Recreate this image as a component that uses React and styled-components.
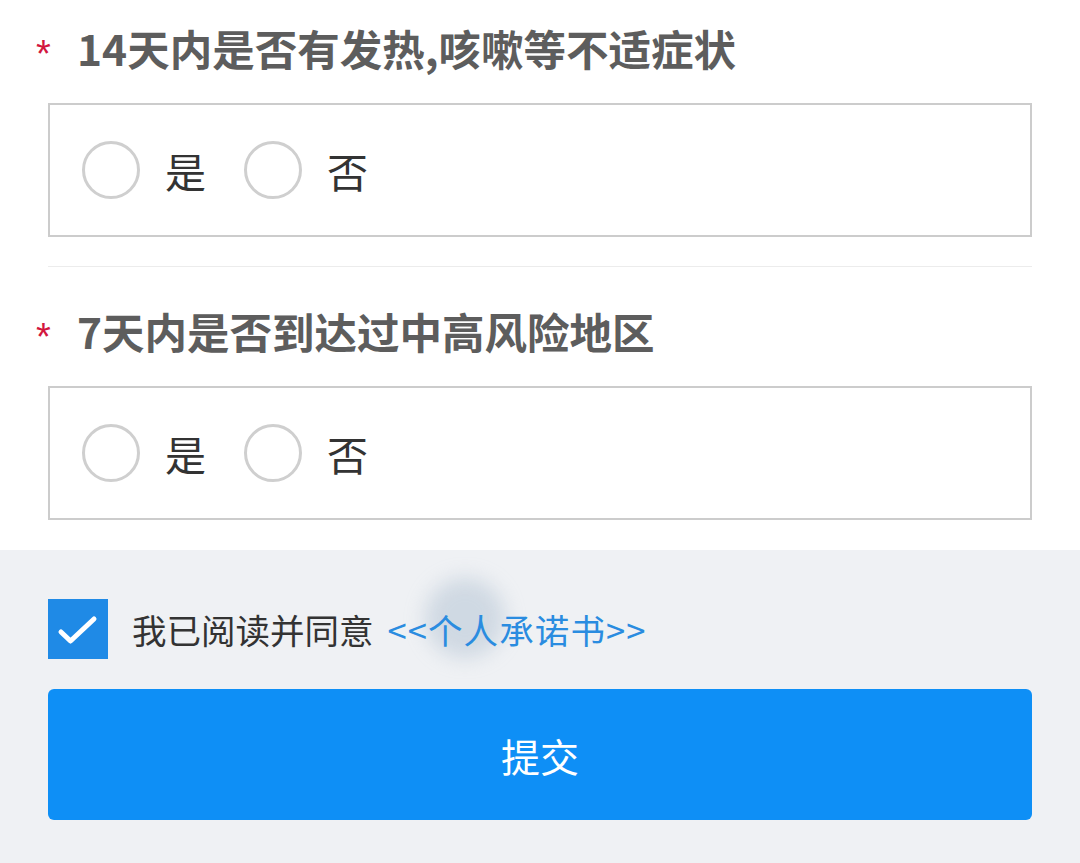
import React, { useState } from 'react';
import styled, { createGlobalStyle } from 'styled-components';

const GlobalStyle = createGlobalStyle`
    html, body {
        margin: 0;
        padding: 0;
        background: #ffffff;
        font-family: "Noto Sans CJK SC", "Noto Sans", sans-serif;
    }
`;

const questions = [
    { id: 'fever', title: '14天内是否有发热,咳嗽等不适症状' },
    { id: 'risk', title: '7天内是否到达过中高风险地区' },
];

const Question = ({ title, value, onChange }) => (
    <QuestionBlock>
        <TitleRow>
            <Star>*</Star>
            <Title>{title}</Title>
        </TitleRow>
        <OptionsBox>
            {['是', '否'].map(opt => (
                <Option key={opt} onClick={() => onChange(opt)}>
                    <Radio checked={value === opt}/>
                    <OptionLabel>{opt}</OptionLabel>
                </Option>
            ))}
        </OptionsBox>
    </QuestionBlock>
);

const App = () => {
    const [answers, setAnswers] = useState({});
    const [agreed, setAgreed] = useState(true);

    return (
        <Page>
            <GlobalStyle/>
            <Form>
                {questions.map((q, i) => (
                    <React.Fragment key={q.id}>
                        {i > 0 ? <Divider/> : null}
                        <Question
                            title={q.title}
                            value={answers[q.id]}
                            onChange={v => setAnswers({ ...answers, [q.id]: v })}
                        />
                    </React.Fragment>
                ))}
            </Form>

            <Footer>
                <Smudge/>
                <AgreeRow>
                    <CheckBox checked={agreed} onClick={() => setAgreed(!agreed)}>
                        {agreed ? (
                            <svg width="60" height="60" viewBox="0 0 60 60">
                                <path d="M13 33 L22.5 42 L46 20" fill="none" stroke="#fff"
                                      strokeWidth="5" strokeLinecap="round" strokeLinejoin="round"/>
                            </svg>
                        ) : null}
                    </CheckBox>
                    <AgreeText>我已阅读并同意</AgreeText>
                    <Link>&lt;&lt;个人承诺书&gt;&gt;</Link>
                </AgreeRow>
                <SubmitButton>提交</SubmitButton>
            </Footer>
        </Page>
    );
};

export default App;

const Page = styled.div`
    display: flex;
    flex-direction: column;
    min-height: 863px;
    background: #eff1f4;
`;

const Form = styled.div`
    display: flex;
    flex-direction: column;
    background: #ffffff;
    padding: 18px 48px 30px;
`;

const QuestionBlock = styled.div`
    display: flex;
    flex-direction: column;
`;

const TitleRow = styled.div`
    display: flex;
    align-items: center;
    height: 60px;
    margin-left: -12px;
`;

const Star = styled.span`
    width: 41px;
    color: #d3173f;
    font-size: 38px;
    font-weight: 400;
    line-height: 1;
    font-family: "Liberation Sans", sans-serif;
    align-self: flex-start;
    margin-top: 17px;
`;

const Title = styled.div`
    color: #5d5d5d;
    font-size: 42.5px;
    font-weight: 700;
    line-height: 60px;
    white-space: nowrap;
`;

const OptionsBox = styled.div`
    display: flex;
    align-items: center;
    height: 134px;
    box-sizing: border-box;
    margin-top: 25px;
    padding-left: 32px;
    border: 2.5px solid #cccccc;
    background: #ffffff;
`;

const Option = styled.div`
    display: flex;
    align-items: center;
    margin-right: 38px;
    cursor: pointer;
`;

const Radio = styled.span`
    width: 58px;
    height: 58px;
    box-sizing: border-box;
    border-radius: 50%;
    border: 3px solid #cfcfcf;
    background: ${props => props.checked ? '#1e8ae8' : '#ffffff'};
    box-shadow: ${props => props.checked ? 'inset 0 0 0 12px #ffffff' : 'none'};
`;

const OptionLabel = styled.span`
    margin-left: 25px;
    color: #333333;
    font-size: 41px;
    line-height: 1;
`;

const Divider = styled.div`
    height: 1px;
    margin: 29px 0 34px;
    background: #ececec;
`;

const Footer = styled.div`
    position: relative;
    display: flex;
    flex-direction: column;
    padding: 49px 48px 44px;
    background: #eff1f4;
    overflow: hidden;
`;

const Smudge = styled.div`
    position: absolute;
    left: 425px;
    top: 28px;
    width: 80px;
    height: 80px;
    border-radius: 50%;
    background: rgba(150, 172, 196, 0.35);
    filter: blur(10px);
    pointer-events: none;
`;

const AgreeRow = styled.div`
    position: relative;
    display: flex;
    align-items: center;
`;

const CheckBox = styled.span`
    display: flex;
    width: 60px;
    height: 60px;
    background: ${props => props.checked ? '#1f8ae6' : '#ffffff'};
    border: ${props => props.checked ? 'none' : '2px solid #cccccc'};
    box-sizing: border-box;
    cursor: pointer;
`;

const AgreeText = styled.span`
    margin-left: 24px;
    color: #333333;
    font-size: 34.5px;
    line-height: 1;
`;

const Link = styled.span`
    margin-left: 14px;
    color: #2a8ce0;
    font-size: 34.5px;
    letter-spacing: 1.1px;
    line-height: 1;
`;

const SubmitButton = styled.button`
    position: relative;
    margin-top: 30px;
    height: 131px;
    border: none;
    border-radius: 6px;
    background: #0e8ff6;
    color: #ffffff;
    font-family: "Noto Sans CJK SC", sans-serif;
    font-size: 39px;
    cursor: pointer;
`;
